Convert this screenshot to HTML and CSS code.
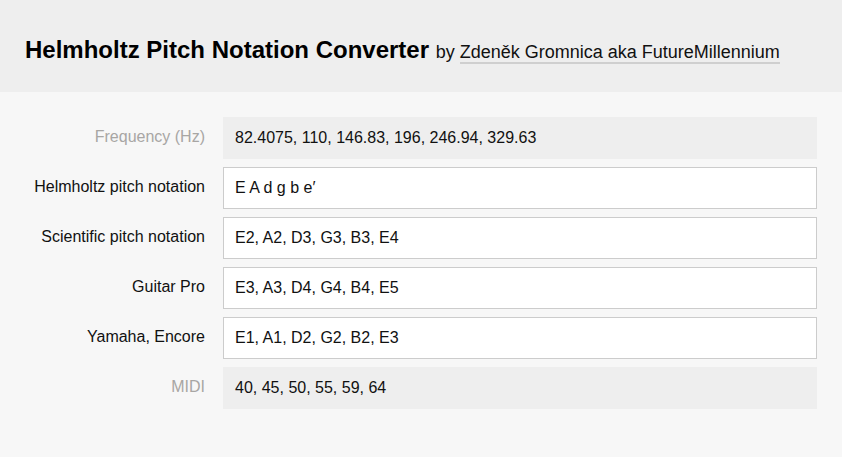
FILE: index.html
```html
<!DOCTYPE html>
<html lang="en">
<head>
<meta charset="utf-8">
<title>Helmholtz Pitch Notation Converter</title>
<link rel="stylesheet" href="styles.css">
</head>
<body>
<header class="header">
  <h1 class="title">Helmholtz Pitch Notation Converter <span class="byline">by <a class="author" href="#">Zdeněk Gromnica aka FutureMillennium</a></span></h1>
</header>
<main class="form">
  <label class="label label-muted">Frequency (Hz)</label>
  <div class="field field-readonly">82.4075, 110, 146.83, 196, 246.94, 329.63</div>
  <label class="label">Helmholtz pitch notation</label>
  <div class="field">E A d g b e′</div>
  <label class="label">Scientific pitch notation</label>
  <div class="field">E2, A2, D3, G3, B3, E4</div>
  <label class="label">Guitar Pro</label>
  <div class="field">E3, A3, D4, G4, B4, E5</div>
  <label class="label">Yamaha, Encore</label>
  <div class="field">E1, A1, D2, G2, B2, E3</div>
  <label class="label label-muted">MIDI</label>
  <div class="field field-readonly">40, 45, 50, 55, 59, 64</div>
</main>
</body>
</html>
```
FILE: styles.css
```css
html, body {
  margin: 0;
  padding: 0;
}
body {
  background: #f7f7f7;
  font-family: "Liberation Sans", Arial, sans-serif;
  color: #111;
}
.header {
  background: #eeeeee;
  height: 92px;
  box-sizing: border-box;
  padding: 35px 25px 0;
}
.title {
  margin: 0;
  font-size: 24px;
  font-weight: bold;
  line-height: 30px;
  color: #000;
}
.byline {
  font-size: 18px;
  font-weight: normal;
  color: #111;
}
.author {
  color: #111;
  text-decoration: none;
  border-bottom: 2px solid #cfcfcf;
}
.form {
  display: grid;
  grid-template-columns: 180px 1fr;
  column-gap: 18px;
  row-gap: 8px;
  padding: 25px 25px 0;
}
.label {
  font-size: 16px;
  text-align: right;
  line-height: 39px;
  color: #111;
}
.label-muted {
  color: #a8a6a4;
}
.field {
  height: 42px;
  box-sizing: border-box;
  background: #fff;
  border: 1px solid #cccccc;
  padding: 0 11px;
  font-size: 16px;
  line-height: 40px;
  color: #111;
}
.field-readonly {
  background: #eeeeee;
  border-color: #eeeeee;
}
```
